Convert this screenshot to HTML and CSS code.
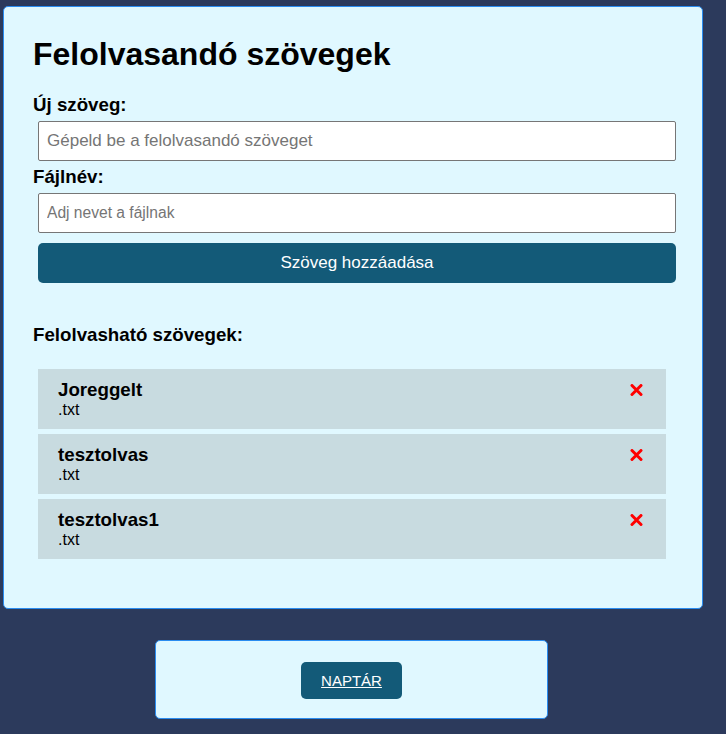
FILE: index.html
```html
<!DOCTYPE html>
<html lang="hu">
<head>
<meta charset="utf-8">
<title>Felolvasandó szövegek</title>
<link rel="stylesheet" href="styles.css">
</head>
<body>
<div class="page">
  <div class="card">
    <h1 class="title">Felolvasandó szövegek</h1>
    <label class="label" for="szoveg">Új szöveg:</label>
    <input class="field field-text" id="szoveg" type="text" placeholder="Gépeld be a felolvasandó szöveget">
    <label class="label second" for="fajlnev">Fájlnév:</label>
    <input class="field field-name" id="fajlnev" type="text" placeholder="Adj nevet a fájlnak">
    <button class="add-btn" type="button">Szöveg hozzáadása</button>
    <h3 class="subtitle">Felolvasható szövegek:</h3>
    <ul class="list">
      <li class="item">
        <div class="item-text"><div class="name">Joreggelt</div><div class="ext">.txt</div></div>
        <svg class="del" viewBox="0 0 13 12" width="13" height="12"><path d="M2 1.5 L11 10.5 M11 1.5 L2 10.5" stroke="#ff0000" stroke-width="3" stroke-linecap="round"/></svg>
      </li>
      <li class="item">
        <div class="item-text"><div class="name">tesztolvas</div><div class="ext">.txt</div></div>
        <svg class="del" viewBox="0 0 13 12" width="13" height="12"><path d="M2 1.5 L11 10.5 M11 1.5 L2 10.5" stroke="#ff0000" stroke-width="3" stroke-linecap="round"/></svg>
      </li>
      <li class="item">
        <div class="item-text"><div class="name">tesztolvas1</div><div class="ext">.txt</div></div>
        <svg class="del" viewBox="0 0 13 12" width="13" height="12"><path d="M2 1.5 L11 10.5 M11 1.5 L2 10.5" stroke="#ff0000" stroke-width="3" stroke-linecap="round"/></svg>
      </li>
    </ul>
  </div>
  <div class="card2">
    <a class="nav-btn" href="#">NAPTÁR</a>
  </div>
</div>
</body>
</html>
```
FILE: styles.css
```css
html, body {
  margin: 0;
  padding: 0;
}
body {
  background: #2c3a5c;
  font-family: "Liberation Sans", Arial, sans-serif;
  color: #000;
  height: 734px;
  overflow: hidden;
}
.page {
  width: 700px;
  margin-left: 3px;
  padding-top: 6px;
}
.card {
  box-sizing: border-box;
  width: 700px;
  background: #e0f8ff;
  border: 1px solid #2a8cf0;
  border-radius: 5px;
  padding: 29px 20px 49px 29px;
}
.title {
  margin: 0 0 21px;
  font-size: 32px;
  line-height: 37px;
  font-weight: bold;
}
.label {
  display: block;
  font-size: 18.72px;
  line-height: 21px;
  font-weight: bold;
  margin: 0 0 6px;
}
.label.second {
  margin-top: 5px;
}
.field {
  display: block;
  box-sizing: border-box;
  width: 638px;
  height: 40px;
  margin: 0 0 0 5px;
  padding: 0 8px;
  border: 1px solid #767676;
  border-radius: 2px;
  background: #fff;
  font-family: "Liberation Sans", Arial, sans-serif;
  font-size: 17px;
  color: #000;
}
.field-name {
  font-size: 15.6px;
}
.field::placeholder {
  color: #757575;
}
.add-btn {
  display: block;
  box-sizing: border-box;
  width: 638px;
  height: 40px;
  margin: 10px 0 0 5px;
  border: none;
  border-radius: 5px;
  background: #135a78;
  color: #fff;
  font-family: "Liberation Sans", Arial, sans-serif;
  font-size: 17px;
}
.subtitle {
  margin: 41px 0 23px;
  font-size: 18.72px;
  line-height: 22px;
  font-weight: bold;
}
.list {
  list-style: none;
  margin: 0 0 0 5px;
  padding: 0;
  width: 628px;
  display: flex;
  flex-direction: column;
  gap: 5px;
}
.item {
  box-sizing: border-box;
  height: 60px;
  background: #c8dbe0;
  padding: 10px 20px;
  display: flex;
  justify-content: space-between;
  align-items: flex-start;
}
.name {
  font-size: 18.72px;
  line-height: 21px;
  font-weight: bold;
}
.ext {
  font-size: 16px;
  line-height: 19px;
}
.del {
  margin-top: 5px;
  margin-right: 3px;
  display: block;
}
.card2 {
  box-sizing: border-box;
  width: 393px;
  margin: 31px 0 0 152px;
  background: #e0f8ff;
  border: 1px solid #2a8cf0;
  border-radius: 5px;
  padding: 21px 0 19px;
  text-align: center;
}
.nav-btn {
  display: inline-block;
  padding: 10px 20px;
  line-height: 17px;
  font-size: 15px;
  color: #fff;
  background: #135a78;
  border-radius: 5px;
  text-decoration: underline;
}
```
